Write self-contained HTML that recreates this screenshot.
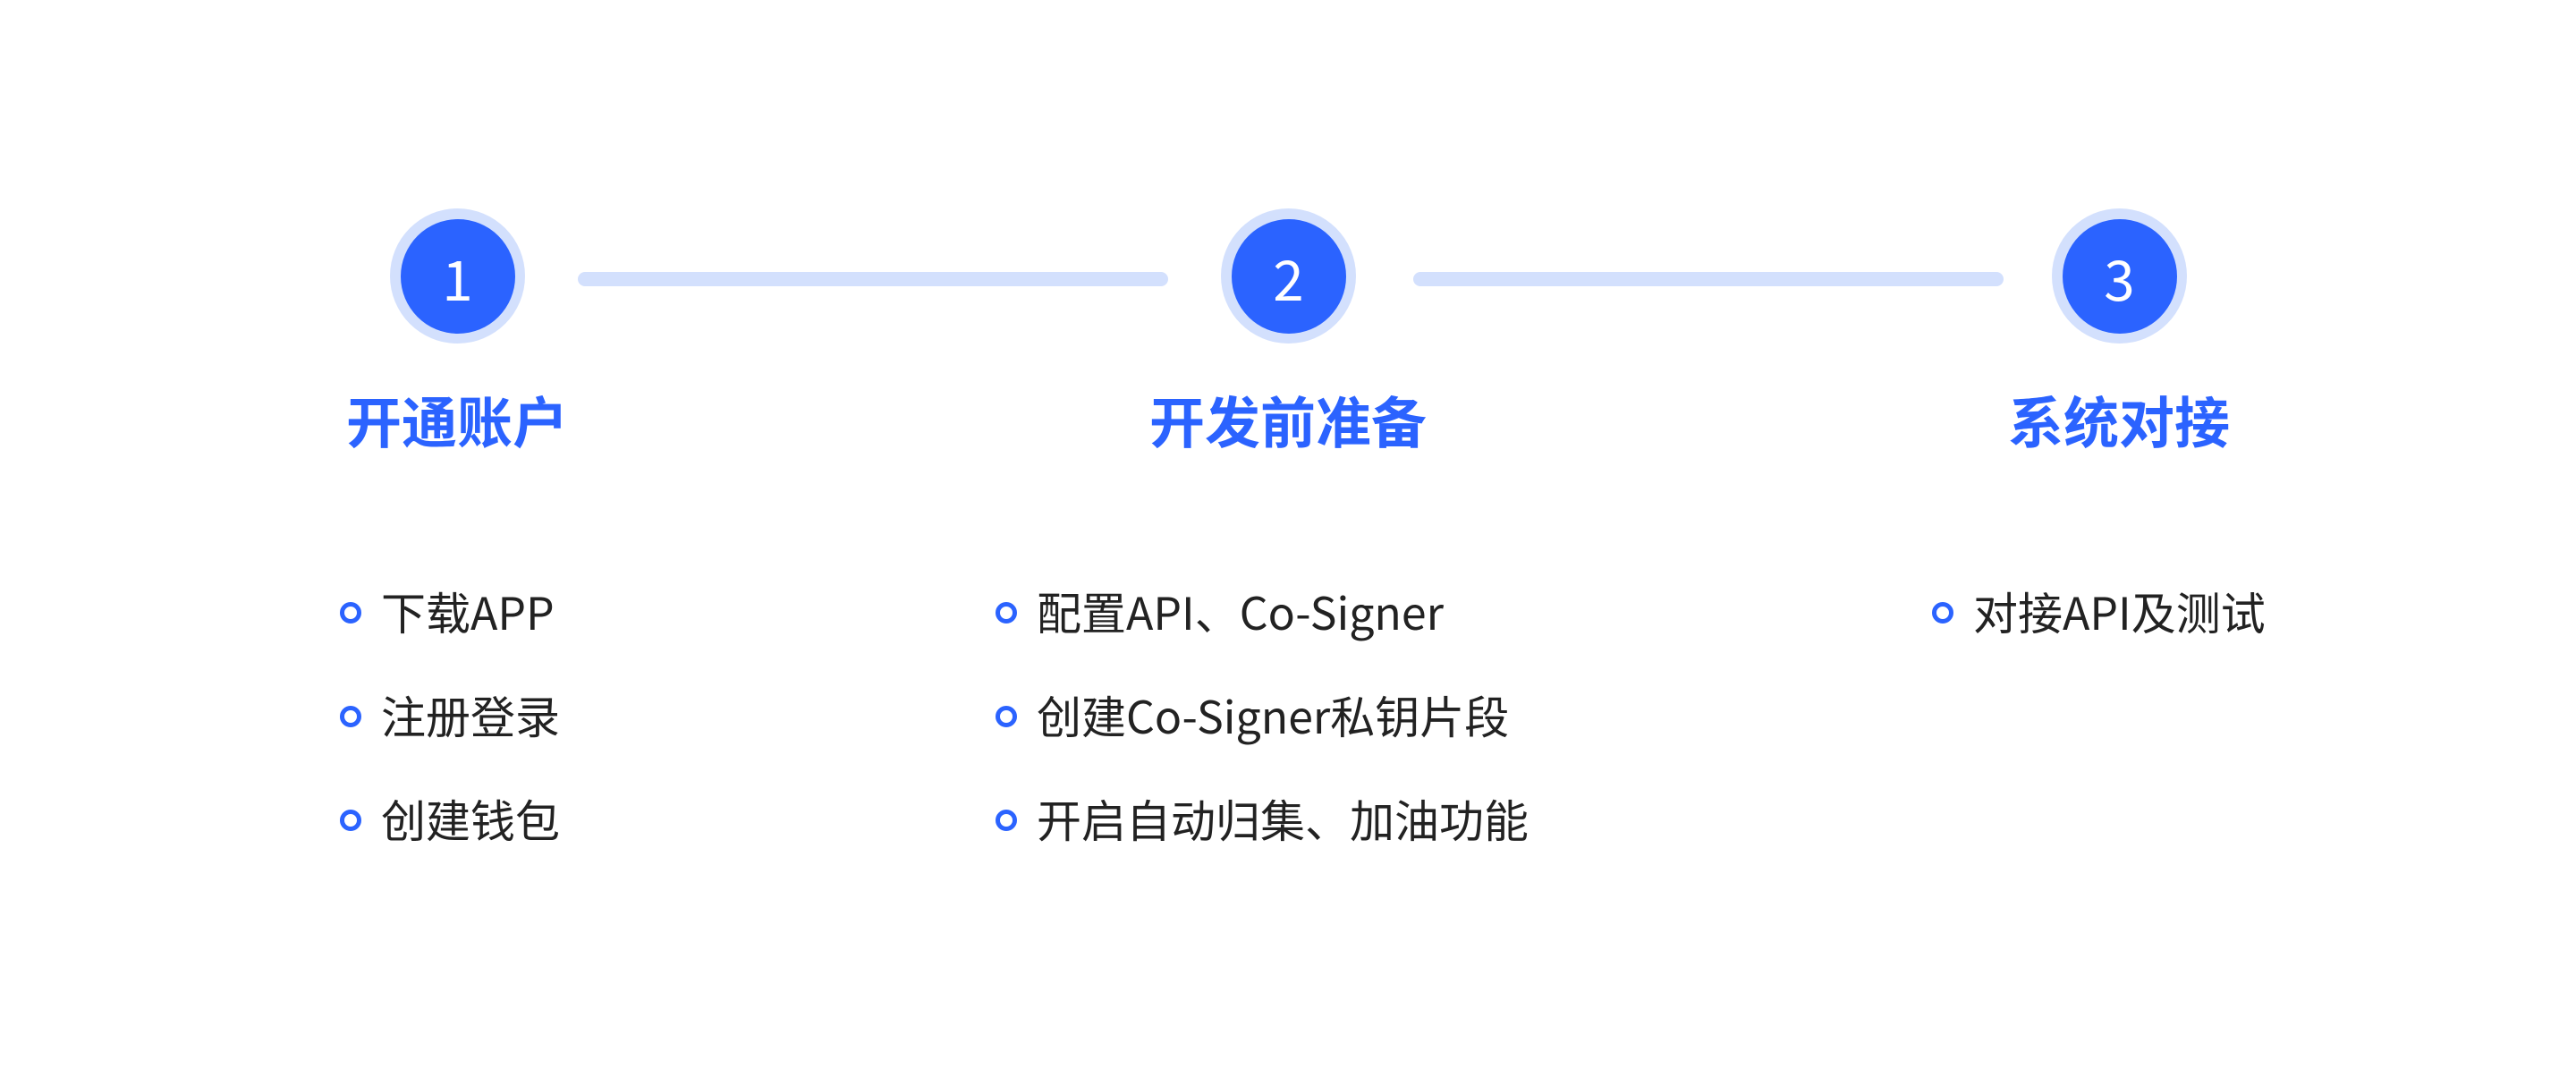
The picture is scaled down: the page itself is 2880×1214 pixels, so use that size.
<!DOCTYPE html>
<html><head><meta charset="utf-8"><style>
html,body{margin:0;padding:0;background:#fff;}
body{width:2880px;height:1214px;position:relative;overflow:hidden;font-family:"Liberation Sans","Noto Sans CJK SC",sans-serif;}
.c{position:absolute;width:151px;height:151px;border-radius:50%;background:#d3e0fd;top:233px;}
.c div{position:absolute;left:11.5px;top:11.5px;width:128px;height:128px;border-radius:50%;background:#2b63ff;color:#fff;font-size:62px;line-height:128px;text-align:center;font-family:"Noto Sans CJK SC",sans-serif;}
.ln{position:absolute;top:304px;height:16px;border-radius:8px;background:#d3e0fd;}
.t{position:absolute;top:428px;width:400px;text-align:center;color:#2b63ff;font-size:62px;font-weight:bold;line-height:80px;font-family:"Noto Sans CJK SC",sans-serif;}
.b{position:absolute;height:60px;line-height:60px;font-size:50px;color:#222;white-space:nowrap;font-family:"Noto Sans CJK SC",sans-serif;font-weight:400;}
.b i{position:absolute;left:0;top:18px;width:14px;height:14px;border:5px solid #2b63ff;border-radius:50%;}
.b span{position:absolute;left:46px;top:-2px;}
</style></head><body>
<div class="c" style="left:436px"><div>1</div></div>
<div class="c" style="left:1365px"><div>2</div></div>
<div class="c" style="left:2294px"><div>3</div></div>
<div class="ln" style="left:646px;width:660px"></div>
<div class="ln" style="left:1580px;width:660px"></div>
<div class="t" style="left:311px">开通账户</div>
<div class="t" style="left:1240px">开发前准备</div>
<div class="t" style="left:2169px">系统对接</div>

<div class="b" style="left:380px;top:655px"><i></i><span>下载APP</span></div>
<div class="b" style="left:380px;top:771px"><i></i><span>注册登录</span></div>
<div class="b" style="left:380px;top:887px"><i></i><span>创建钱包</span></div>

<div class="b" style="left:1113px;top:655px"><i></i><span>配置API、Co-Signer</span></div>
<div class="b" style="left:1113px;top:771px"><i></i><span>创建Co-Signer私钥片段</span></div>
<div class="b" style="left:1113px;top:887px"><i></i><span>开启自动归集、加油功能</span></div>

<div class="b" style="left:2160px;top:655px"><i></i><span>对接API及测试</span></div>
</body></html>
